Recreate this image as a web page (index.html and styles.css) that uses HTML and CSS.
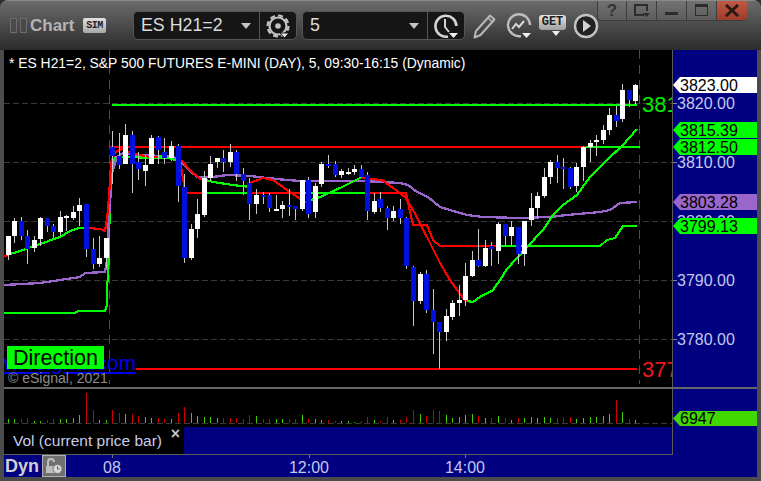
FILE: index.html
```html
<!DOCTYPE html>
<html lang="en">
<head>
<meta charset="utf-8">
<title>Chart</title>
<link rel="stylesheet" href="styles.css">
</head>
<body>
<div class="window">
  <header class="titlebar">
    <div class="grip"><span></span><span></span></div>
    <div class="title">Chart</div>
    <div class="sim">SIM</div>
    <div class="combo combo-symbol">
      <div class="combo-text">ES H21=2</div>
      <div class="caret"></div>
      <div class="combo-icon">
        <svg width="26" height="26" viewBox="0 0 26 26" class="ico">
          <circle cx="13" cy="13" r="8.500" fill="none" stroke="#c4c4c4" stroke-width="2.200"/>
          <circle cx="13" cy="13" r="10.500" fill="none" stroke="#c4c4c4" stroke-width="2.200" stroke-dasharray="5 3.200"/>
          <circle cx="13" cy="13" r="2.800" fill="#c4c4c4"/>
          <path d="M15 20h9l-4.500 5z" fill="#e8e8e8" stroke="#161616"/>
        </svg>
      </div>
    </div>
    <div class="combo combo-interval">
      <div class="combo-text">5</div>
      <div class="caret"></div>
      <div class="combo-icon">
        <svg width="26" height="26" viewBox="0 0 26 26" class="ico">
          <path d="M15 23.500A10.500 10.500 0 1 1 23.400 13" fill="none" stroke="#d4d4d4" stroke-width="2.600"/>
          <path d="M12 6v8l4 5" fill="none" stroke="#d4d4d4" stroke-width="2"/>
          <path d="M16 20h9l-4.500 5z" fill="#f0f0f0"/>
        </svg>
      </div>
    </div>
    <svg class="tool tool-pencil" width="26" height="28" viewBox="0 0 26 28">
      <path d="M18 3.500l4.500 4-14 15.500-6 2.500 1.500-6.500z" fill="none" stroke="#b8b8b8" stroke-width="2" stroke-linejoin="round"/>
      <path d="M16 6l4.500 4" stroke="#b8b8b8" stroke-width="1.500"/>
    </svg>
    <svg class="tool tool-trend" width="26" height="28" viewBox="0 0 26 28">
      <path d="M15 24A11 11 0 1 1 24 13" fill="none" stroke="#bdbdbd" stroke-width="2.400"/>
      <path d="M6 17l4-5 3 3 5-6" fill="none" stroke="#d8d8d8" stroke-width="2"/>
      <path d="M16 21h9l-4.500 5z" fill="#f0f0f0"/>
    </svg>
    <div class="tool tool-get">
      <div class="get-badge">GET</div>
      <div class="get-caret"></div>
    </div>
    <svg class="tool tool-play" width="26" height="26" viewBox="0 0 26 26">
      <circle cx="13" cy="13" r="11" fill="#222" stroke="#c4c4c4" stroke-width="2.400"/>
      <path d="M10 7l8 6-8 6z" fill="#d4d4d4"/>
    </svg>
    <nav class="winbtns">
      <div class="winbtn winbtn-help">?</div>
      <div class="winbtn">
        <svg width="20" height="16" viewBox="0 0 20 16"><path d="M12 12H3V2h12v6" fill="none" stroke="#2c2c2c" stroke-width="2"/><path d="M11 10h7l-3.500 4z" fill="#2c2c2c"/></svg>
      </div>
      <div class="winbtn">
        <svg width="16" height="16" viewBox="0 0 16 16"><rect x="1" y="9" width="13" height="3" fill="#2c2c2c"/></svg>
      </div>
      <div class="winbtn">
        <svg width="16" height="16" viewBox="0 0 16 16"><rect x="1.500" y="1.500" width="12" height="11" fill="none" stroke="#2c2c2c"/><rect x="1" y="1" width="13" height="3" fill="#2c2c2c"/></svg>
      </div>
      <div class="winbtn winbtn-close">
        <svg width="16" height="14" viewBox="0 0 16 14"><path d="M2 1l12 11M14 1L2 12" stroke="#2a1a16" stroke-width="3"/></svg>
      </div>
    </nav>
  </header>

  <main class="panes">
    <section class="pane-row price-row">
      <div class="plot">
        <svg id="price" class="plot-svg" width="668" height="337" viewBox="4 50 668 337"></svg>
        <div class="study-title">* ES H21=2, S&amp;P 500 FUTURES E-MINI (DAY), 5, 09:30-16:15 (Dynamic)</div>
        <div class="big-level big-green">3812.50</div>
        <div class="big-level big-red">3775.00</div>
        <div class="link-text">www.esignal.com</div>
        <div class="direction">Direction</div>
        <div class="copyright">© eSignal, 2021</div>
      </div>
      <div class="axis">
        <div class="tick tick-3820"></div>
        <div class="tick tick-3810"></div>
        <div class="tick tick-3790"></div>
        <div class="tick tick-3780"></div>
        <div class="ax ax-3820">3820.00</div>
        <div class="ax ax-3810">3810.00</div>
        <div class="ax ax-3800">3800.00</div>
        <div class="ax ax-3790">3790.00</div>
        <div class="ax ax-3780">3780.00</div>
        <div class="flag flag-white flag-3823">3823.00</div>
        <div class="flag flag-green flag-3815">3815.39</div>
        <div class="flag flag-green flag-3812">3812.50</div>
        <div class="flag flag-purple flag-3803">3803.28</div>
        <div class="flag flag-green flag-3799">3799.13</div>
      </div>
    </section>
    <div class="sep"></div>
    <section class="pane-row vol-row">
      <div class="plot">
        <svg id="volume" class="plot-svg" width="668" height="38" viewBox="4 389 668 38"></svg>
      </div>
      <div class="axis">
        <div class="flag flag-vol">6947</div>
      </div>
    </section>
    <section class="pane-row legend-row">
      <div class="legend-area">
        <div class="legend">Vol (current price bar)<span class="legend-close">×</span></div>
      </div>
      <div class="axis"></div>
    </section>
    <section class="time-row">
      <div class="dyn">Dyn</div>
      <div class="lock">
        <svg width="20" height="18" viewBox="0 0 20 18">
          <path d="M2 16V9h9v7z" fill="#bdbdbd"/>
          <path d="M4 9V5a3 3 0 0 1 6 0" fill="none" stroke="#bdbdbd" stroke-width="2"/>
          <circle cx="13.500" cy="12" r="4.500" fill="#d8d8d8" stroke="#777"/>
          <path d="M13.500 9.500V12h2" fill="none" stroke="#555"/>
        </svg>
      </div>
      <div class="time-scale">
        <div class="time t-08">08</div>
        <div class="time t-12">12:00</div>
        <div class="time t-14">14:00</div>
      </div>
    </section>
  </main>
</div>
<script src="chart.js"></script>
</body>
</html>
```

FILE: styles.css
```css
* { box-sizing: border-box; }
html, body { margin: 0; padding: 0; background: #2e2e2e; }
body { width: 761px; height: 481px; overflow: hidden; font-family: "Liberation Sans", Arial, sans-serif; }

.window {
  width: 761px;
  height: 481px;
  display: flex;
  flex-direction: column;
  background: #4c4c4c;
  border-radius: 8px 8px 0 0;
  overflow: hidden;
}

.titlebar {
  height: 50px;
  flex: none;
  display: flex;
  align-items: center;
  padding-left: 10px;
  position: relative;
  background: linear-gradient(#6a6a6a 0, #5e5e5e 10px, #3e3e3e 34px, #2a2a2a 50px);
  border-top: 1px solid #8a8a8a;
}

.grip { display: flex; gap: 3px; width: 17px; }
.grip span { width: 7px; height: 15px; background: #4a4a4a; border: 1px solid #6c6c6c; }
.title { margin-left: 3px; width: 53px; font-size: 17px; font-weight: 700; color: #b4b4b4; }
.sim {
  width: 23px;
  height: 15px;
  background: linear-gradient(#e0e0e0, #a8a8a8);
  border-radius: 2px;
  color: #222;
  font: 700 10px/15px "Liberation Mono", monospace;
  text-align: center;
  letter-spacing: -0.5px;
}

.combo {
  height: 29px;
  display: flex;
  align-items: center;
  background: #161616;
  border: 1px solid #565656;
  border-radius: 5px;
  color: #dcdcdc;
  font-size: 17.800px;
}
.combo-symbol { width: 164px; margin-left: 27px; }
.combo-interval { width: 163px; margin-left: 5px; }
.combo-text { flex: 1; padding-left: 7px; }
.caret {
  width: 0;
  height: 0;
  margin-right: 8px;
  border-left: 5px solid transparent;
  border-right: 5px solid transparent;
  border-top: 6px solid #c4c4c4;
}
.combo-icon {
  width: 37px;
  height: 27px;
  border-left: 1px solid #565656;
  display: flex;
  align-items: center;
  justify-content: center;
}

.tool { flex: none; }
.tool-pencil { margin-left: 7px; }
.tool-trend { margin-left: 8px; }
.tool-get { margin-left: 7px; width: 27px; display: flex; flex-direction: column; align-items: center; }
.get-badge {
  width: 27px;
  height: 15px;
  border-radius: 3px;
  background: linear-gradient(#e4e4e4, #a0a0a0);
  color: #222;
  font: 700 12px/15px "Liberation Mono", monospace;
  text-align: center;
}
.get-caret {
  margin: 1px 0 0 6px;
  width: 0;
  height: 0;
  border-left: 4px solid transparent;
  border-right: 4px solid transparent;
  border-top: 5px solid #eee;
}
.tool-play { margin-left: 7px; }

.winbtns {
  position: absolute;
  left: 597px;
  top: 0;
  width: 150px;
  height: 20px;
  display: flex;
}
.winbtn {
  width: 30px;
  height: 20px;
  display: flex;
  align-items: center;
  justify-content: center;
  background: linear-gradient(#727272, #5c5c5c);
  border-right: 1px solid #3c3c3c;
  border-bottom: 1px solid #3c3c3c;
}
.winbtn-help { color: #333; font-size: 17px; font-weight: 700; border-left: 1px solid #3c3c3c; border-radius: 0 0 0 4px; }
.winbtn-close { background: linear-gradient(#c05a46, #a03c2c); border-radius: 0 0 4px 0; border-right: 0; }

.panes { flex: 1; display: flex; flex-direction: column; padding: 0 4px 4px; }
.pane-row { display: flex; flex: none; }
.price-row { height: 337px; }
.vol-row { height: 38px; }
.legend-row { height: 28px; }
.sep { height: 2px; background: #666; flex: none; }

.plot { width: 668px; position: relative; overflow: hidden; background: #000; }
.plot-svg { display: block; }

.axis {
  width: 85px;
  position: relative;
  background: #000080;
  border-left: 1px solid #5c5c5c;
  overflow: hidden;
}

.study-title { position: absolute; left: 5px; top: 5px; font-size: 13.880px; line-height: 16px; color: #fff; white-space: nowrap; }
.big-level { position: absolute; left: 638px; font-size: 22px; line-height: 24px; white-space: nowrap; }
.big-green { top: 43px; color: #00f000; }
.big-red { top: 308px; color: #f01818; }
.link-text { position: absolute; right: 536px; top: 303px; font-size: 21px; line-height: 20px; color: #0000f0; text-decoration: underline; white-space: nowrap; }
.direction { position: absolute; left: 3px; top: 296px; width: 97px; height: 23px; background: #00ff00; color: #000; font-size: 21.500px; line-height: 24px; padding-left: 6px; overflow: hidden; white-space: nowrap; }
.copyright { position: absolute; left: 4px; top: 320px; font-size: 14px; line-height: 16px; color: #8c8c8c; white-space: nowrap; }

.tick { position: absolute; left: 0; width: 4px; height: 1px; background: #888; }
.tick-3820 { top: 53px; }
.tick-3810 { top: 112px; }
.tick-3790 { top: 230px; }
.tick-3780 { top: 289px; }

.ax { position: absolute; left: 4px; font-size: 16px; line-height: 18px; color: #c4c8ec; white-space: nowrap; }
.ax-3820 { top: 45px; }
.ax-3810 { top: 104px; }
.ax-3800 { top: 163px; }
.ax-3790 { top: 222px; }
.ax-3780 { top: 281px; }

.flag {
  position: absolute;
  left: 0;
  width: 84px;
  height: 16px;
  padding-left: 7px;
  font-size: 16px;
  line-height: 17px;
  color: #000;
  clip-path: polygon(0 50%, 7px 0, 100% 0, 100% 100%, 7px 100%);
}
.flag-white { background: #fff; }
.flag-green { background: #00ff00; }
.flag-purple { background: #9966cc; }
.flag-vol { background: #40d800; top: 22px; height: 15px; line-height: 16px; }
.flag-3823 { top: 27px; }
.flag-3815 { top: 72px; }
.flag-3812 { top: 89px; }
.flag-3803 { top: 144px; }
.flag-3799 { top: 168px; }

.legend-area { width: 668px; height: 28px; background: #000080; border-bottom: 1px solid #5c5c5c; }
.legend { width: 180px; height: 27px; background: #000; position: relative; padding-left: 9px; font-size: 15.500px; line-height: 28px; color: #c8cce8; white-space: nowrap; }
.legend-close { position: absolute; right: 4px; top: -7px; font-size: 16px; font-weight: 700; color: #c4c4c4; }

.time-row { height: 22px; flex: none; display: flex; background: #000080; position: relative; }
.dyn { width: 38px; padding-left: 1px; font-size: 18px; font-weight: 700; line-height: 23px; color: #d0d0d0; }
.lock { width: 24px; height: 22px; background: #707070; border: 1px solid #b0b0b0; display: flex; align-items: center; justify-content: center; }
.time-scale { position: relative; flex: 1; }
.time { position: absolute; top: 0; width: 60px; margin-left: -30px; text-align: center; font-size: 16px; line-height: 26px; color: #c4c8ec; }
.time::before { content: ""; position: absolute; left: 30px; top: 0; width: 1px; height: 3px; background: #777; }
.t-08 { left: 46px; }
.t-12 { left: 243px; }
.t-14 { left: 399px; }
```

FILE: chart.js
```js
var NS = "http://www.w3.org/2000/svg";
var WHITE = "#ffffff", BLUE = "#0010e0";

/* [blue?, wickTop, bodyTop, bodyBottom, wickBottom] for each bar, page y */
var bars = [
[0,236,236,255,260],[0,218,221,236,243],[1,217,221,236,240],[1,230,236,249,264],[0,236,240,248,252],
[0,217,218,239,246],[1,218,218,226,232],[1,224,226,232,238],[0,211,217,232,236],[0,215,216,218,231],
[0,206,212,218,220],[0,198,205,211,226],[1,204,204,249,257],[1,238,249,264,269],[0,236,258,264,267],
[0,238,238,258,268],[1,131,147,156,184],[1,133,156,165,169],[0,124,135,164,164],[1,131,135,164,193],
[1,152,162,169,180],[0,155,165,171,186],[0,135,138,164,164],[1,136,137,150,164],[1,138,152,158,164],
[0,141,146,158,161],[1,144,146,186,202],[1,174,187,258,263],[0,224,229,258,260],[0,199,214,229,238],
[0,171,178,215,217],[0,156,164,178,181],[0,158,158,162,168],[1,150,158,162,172],[0,144,152,162,167],
[1,150,152,174,181],[1,168,174,181,195],[1,178,183,204,220],[0,189,195,204,214],[1,192,195,197,204],
[1,193,195,208,212],[0,195,209,211,211],[0,201,205,209,218],[1,189,205,207,216],[1,206,206,209,220],
[0,180,180,209,211],[1,177,180,214,218],[0,183,186,212,218],[0,162,164,184,187],[1,155,164,166,168],
[1,161,164,175,177],[0,169,171,175,178],[0,168,172,174,175],[0,165,169,172,175],[1,165,169,177,177],
[1,172,175,211,220],[0,193,201,212,214],[1,192,199,208,212],[1,206,208,218,230],[0,206,211,218,221],
[1,199,209,218,224],[1,217,218,266,269],[1,266,267,301,326],[0,272,274,301,304],[1,270,274,310,313],
[1,289,310,322,354],[1,322,322,332,369],[0,309,316,332,341],[0,300,303,317,320],[0,285,300,303,316],
[0,263,276,300,306],[0,251,260,276,277],[1,229,260,266,267],[0,240,248,266,267],[1,242,246,249,266],
[0,222,224,251,264],[1,224,224,236,246],[0,221,227,236,246],[1,227,227,254,264],[0,221,221,254,266],
[0,193,208,220,226],[0,192,196,208,218],[0,168,177,196,198],[0,160,162,177,184],[1,155,162,168,183],
[1,158,167,169,189],[1,167,168,187,189],[0,163,167,186,192],[0,146,147,167,181],[0,140,143,147,162],
[0,135,140,142,156],[0,125,130,140,144],[0,108,115,130,135],[1,106,115,121,127],[0,84,90,119,122],
[1,90,90,100,107],[0,84,85,101,104]
];

/* height, red? for each volume bar */
var R = 1, G = 0;
var vols = [
4,G,4,G,4,R,5,R,2,G,2,G,3,R,4,R,4,G,4,G,5,G,8,G,30,R,13,R,3,G,3,G,13,R,10,R,9,G,9,R,7,R,6,G,5,G,5,R,4,R,4,G,10,R,16,R,10,G,7,G,6,G,6,G,5,G,5,R,5,R,5,R,4,R,
8,R,7,G,4,R,4,R,4,G,4,G,4,R,4,R,8,G,4,R,4,G,3,G,3,R,2,R,2,G,2,G,1,G,2,R,6,R,3,G,2,R,6,R,3,G,3,R,6,R,13,R,9,G,7,R,13,R,12,R,8,G,5,G,6,G,8,G,9,G,7,R,5,G,5,R,7,G,
5,R,3,G,5,R,5,G,6,G,5,G,6,G,5,G,5,R,6,R,6,R,4,G,5,G,6,G,6,G,7,G,9,G,23,R,11,G,4,R,3,G
];

var LIME = "#00ff00", RED = "#ff0000", PURPLE = "#9966cc";
var lines = [
  /* slow step band */
  [LIME, 2, "4,313 75,313 78,311 105,311 107,305 107,282 108,282"],
  [LIME, 2.200, "108,282 110,200 112,165 115,157 173,158 180,160"],
  [RED, 2, "180,160 184,185 185,193 206,193"],
  [LIME, 2, "206,193 250,193"],
  [RED, 2, "250,193 305,193"],
  [LIME, 2, "305,193 365,193"],
  [RED, 2.200, "365,193 406,193 413,225 427,225 433,240 440,246 500,246"],
  [LIME, 2, "500,246 600,246 607,240 615,238 623,226 637,226"],
  /* purple average */
  [PURPLE, 2.300, "4,285 40,283 80,277 85,273 105,272 107,260 108,233 112,173 117,157 123,153 133,155 167,156 177,158 187,168 197,177 213,177 227,175 250,176 267,178 287,180 300,181 363,181 400,183 408,185 417,192 428,197 440,207 450,210 467,215 483,217 520,218 550,217 567,215 600,212 610,210 620,203 637,202"],
  /* fast average */
  [RED, 2.200, "4,256 7,256"],
  [LIME, 2.200, "7,255 20,251 40,244 60,237 70,231 79,228 88,228"],
  [RED, 2.200, "88,228 100,229 105,231 107,220 109,197 111,163 115,152 122,149 128,152 140,155 150,157 158,157"],
  [LIME, 2.200, "158,156 163,156 175,160 181,160"],
  [RED, 2.200, "181,160 190,170 200,179 206,180"],
  [LIME, 2.200, "206,180 213,182 233,185 250,187"],
  [RED, 2.200, "250,183 263,178 273,180 287,190 302,200 306,202"],
  [LIME, 2.200, "306,202 320,197 340,188 362,177"],
  [RED, 2.200, "362,178 370,179 382,180 393,188 405,197 413,210 427,237 440,263 450,280 463,298 467,301"],
  [LIME, 2.200, "467,301 473,302 480,297 493,290 500,280 507,269 527,247 543,230 553,215 563,205 577,195 590,177 607,160 623,145 637,129"],
  /* flat levels */
  [LIME, 2, "112,105 637,105"],
  [RED, 2, "109,147 586,147"],
  [LIME, 2, "586,147 640,147"],
  [RED, 2, "136,369 637,369"]
];

function el(name, attrs, parent) {
  var e = document.createElementNS(NS, name);
  for (var k in attrs) e.setAttribute(k, attrs[k]);
  parent.appendChild(e);
  return e;
}
function left(i) { return Math.floor(6 + 6.54 * i); }

var price = document.getElementById("price");
var volume = document.getElementById("volume");

[103, 162, 221, 280, 339].forEach(function (y) {
  el("line", { x1: 4, x2: 672, y1: y + 0.5, y2: y + 0.5, stroke: "#3a3a3a", "stroke-dasharray": "6 3" }, price);
});
[109, 639].forEach(function (x) {
  el("line", { x1: x + 0.5, x2: x + 0.5, y1: 50, y2: 384, stroke: "#4c4c4c", "stroke-dasharray": "9 6" }, price);
});

lines.forEach(function (l) {
  el("polyline", { points: l[2], fill: "none", stroke: l[0], "stroke-width": l[1], "shape-rendering": "crispEdges" }, price);
});

bars.forEach(function (b, i) {
  var x = left(i);
  el("rect", { x: x + 2, y: b[1], width: 1, height: b[4] - b[1], fill: "#c8c8c8", "shape-rendering": "crispEdges" }, price);
  el("rect", { x: x, y: b[2], width: 5, height: b[3] - b[2], fill: b[0] ? BLUE : WHITE, "shape-rendering": "crispEdges" }, price);
});

el("line", { x1: 4, x2: 672, y1: 423.5, y2: 423.5, stroke: "#3a3a3a", "stroke-dasharray": "6 3" }, volume);
for (var v = 0; v < bars.length; v++) {
  var h = vols[v * 2];
  el("rect", {
    x: left(v) + 2, y: 423 - h, width: 1, height: h,
    fill: vols[v * 2 + 1] ? "#d00000" : "#40d000",
    "shape-rendering": "crispEdges"
  }, volume);
}
```
